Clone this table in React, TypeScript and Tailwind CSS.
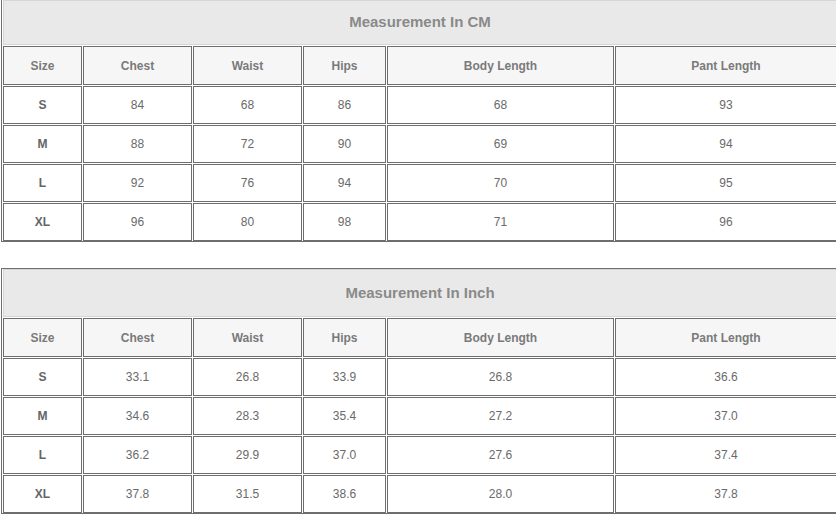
import React from "react";

const headers = ["Size", "Chest", "Waist", "Hips", "Body Length", "Pant Length"];

const cm = [
  ["S", "84", "68", "86", "68", "93"],
  ["M", "88", "72", "90", "69", "94"],
  ["L", "92", "76", "94", "70", "95"],
  ["XL", "96", "80", "98", "71", "96"],
];

const inch = [
  ["S", "33.1", "26.8", "33.9", "26.8", "36.6"],
  ["M", "34.6", "28.3", "35.4", "27.2", "37.0"],
  ["L", "36.2", "29.9", "37.0", "27.6", "37.4"],
  ["XL", "37.8", "31.5", "38.6", "28.0", "37.8"],
];

function SizeTable({ title, rows, titleH, topBorder }: { title: string; rows: string[][]; titleH: string; topBorder: boolean }) {
  return (
    <div
      className={`w-[836px] ml-[1px] border-[#6e6e6e] border-l border-b border-r-0 ${topBorder ? "border-t" : ""}`}
    >
      <div className="grid grid-cols-[79px_109px_109px_83px_227px_222px] gap-[1px] pl-[1px]">
        <div
          className={`col-span-6 ${titleH} bg-[#e9e9e9] border border-[#d6d6d6] flex items-center justify-center text-[15px] font-bold text-[#8a8a8a]`}
        >
          {title}
        </div>
        {headers.map((h) => (
          <div
            key={h}
            className="h-[39px] bg-[#f6f6f6] border border-[#6e6e6e] flex items-center justify-center text-[12px] font-bold text-[#7a7a7a]"
          >
            {h}
          </div>
        ))}
        {rows.map((r) =>
          r.map((c, i) => (
            <div
              key={r[0] + i}
              className={`h-[38px] bg-white border border-[#6e6e6e] flex items-center justify-center text-[12px] ${
                i === 0 ? "font-bold text-[#666666]" : "text-[#6a6a6a]"
              }`}
            >
              {c}
            </div>
          ))
        )}
      </div>
    </div>
  );
}

export default function App() {
  return (
    <div
      className="w-[836px] h-[517px] bg-white overflow-hidden"
      style={{ fontFamily: '"Liberation Sans", Arial, sans-serif' }}
    >
      <SizeTable title="Measurement In CM" rows={cm} titleH="h-[45px]" topBorder={false} />
      <div className="h-[26px]" />
      <SizeTable title="Measurement In Inch" rows={inch} titleH="h-[48px]" topBorder={true} />
    </div>
  );
}
